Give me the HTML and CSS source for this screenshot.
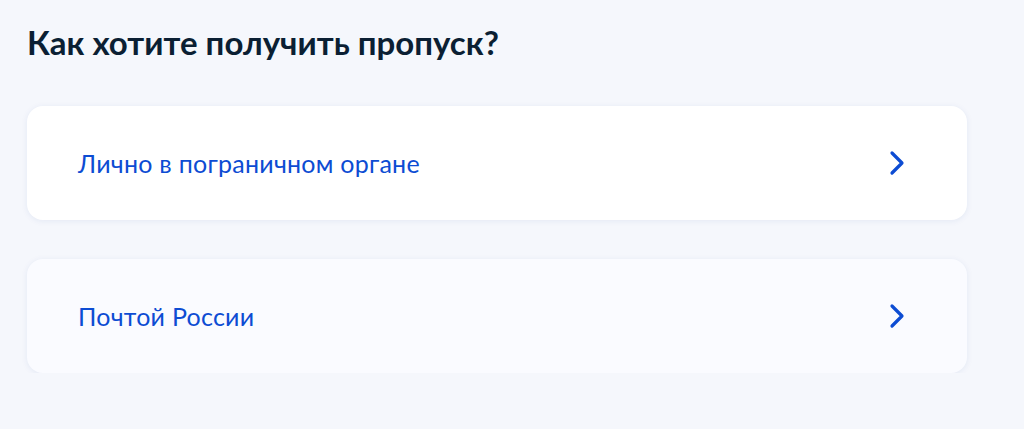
FILE: index.html
```html
<!DOCTYPE html>
<html lang="ru">
<head>
    <meta charset="UTF-8">
    <meta name="viewport" content="width=device-width, initial-scale=1.0">
    <title>Как хотите получить пропуск?</title>
    <link rel="stylesheet" href="styles.css">
</head>
<body>
    <div class="page">
        <h1 class="title">Как хотите получить пропуск?</h1>
        <div class="options">
            <a class="option" href="#">
                <span class="option-text">Лично в пограничном органе</span>
                <svg class="chevron" width="16" height="26" viewBox="0 0 16 26">
                    <path d="M3 3 L13 13 L3 23" fill="none" stroke="#0d4cd3" stroke-width="3.2" stroke-linecap="round" stroke-linejoin="round"/>
                </svg>
            </a>
            <a class="option option-hover" href="#">
                <span class="option-text">Почтой России</span>
                <svg class="chevron" width="16" height="26" viewBox="0 0 16 26">
                    <path d="M3 3 L13 13 L3 23" fill="none" stroke="#0d4cd3" stroke-width="3.2" stroke-linecap="round" stroke-linejoin="round"/>
                </svg>
            </a>
        </div>
    </div>
</body>
</html>
```

FILE: styles.css
```css
body {
    margin: 0;
    font-family: Lato, "Open Sans", sans-serif;
    background-color: #f5f7fc;
}
.page {
    padding: 20px 57px 0 27px;
}
.title {
    margin: 0 0 42px 0;
    font-size: 33px;
    line-height: 44px;
    font-weight: 700;
    color: #0b1f33;
}
.options {
    display: flex;
    flex-direction: column;
    gap: 39px;
}
.option {
    display: flex;
    align-items: center;
    justify-content: space-between;
    height: 114px;
    padding: 0 62px 0 51px;
    background-color: #ffffff;
    border-radius: 16px;
    box-shadow: 0 1px 6px rgba(30, 70, 150, 0.08);
    text-decoration: none;
}
.option-hover {
    background-color: #fafbff;
}
.option-text {
    font-size: 25px;
    letter-spacing: 0.25px;
    color: #0d4cd3;
}
.chevron {
    display: block;
}
```
